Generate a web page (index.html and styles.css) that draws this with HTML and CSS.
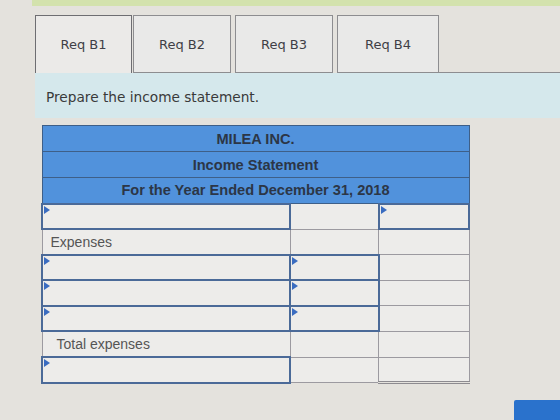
FILE: index.html
```html
<!DOCTYPE html>
<html lang="en">
<head>
  <meta charset="UTF-8">
  <title>Income Statement</title>
  <meta name="viewport" content="width=device-width, initial-scale=1.0">
  <link rel="stylesheet" href="styles.css">
</head>
<body>

  <div class="topbar"></div>

  <div class="tabs">
    <div class="tab active">Req B1</div>
    <div class="tab">Req B2</div>
    <div class="tab">Req B3</div>
    <div class="tab">Req B4</div>
    <div class="tab-rest"></div>
  </div>

  <div class="panel">Prepare the income statement.</div>

  <table class="statement">
    <colgroup>
      <col class="c-label">
      <col class="c-amt">
      <col class="c-total">
    </colgroup>
    <tr class="head"><th colspan="3">MILEA INC.</th></tr>
    <tr class="head"><th colspan="3">Income Statement</th></tr>
    <tr class="head"><th colspan="3">For the Year Ended December 31, 2018</th></tr>

    <tr>
      <td class="field"></td>
      <td></td>
      <td class="field"></td>
    </tr>
    <tr>
      <td class="label">Expenses</td>
      <td></td>
      <td></td>
    </tr>
    <tr>
      <td class="field"></td>
      <td class="field"></td>
      <td></td>
    </tr>
    <tr>
      <td class="field"></td>
      <td class="field"></td>
      <td></td>
    </tr>
    <tr>
      <td class="field"></td>
      <td class="field"></td>
      <td></td>
    </tr>
    <tr>
      <td class="label indent">Total expenses</td>
      <td></td>
      <td></td>
    </tr>
    <tr>
      <td class="field"></td>
      <td></td>
      <td class="double"></td>
    </tr>
  </table>

  <div class="footer">
    <button class="next"></button>
  </div>

</body>
</html>
```

FILE: styles.css
```css
* {
  box-sizing: border-box;
}
body {
  margin: 0;
  background: #e4e2dd;
  font-family: "DejaVu Sans", Verdana, sans-serif;
  color: #3d3d3d;
  overflow: hidden;
}

.topbar {
  height: 6px;
  margin-left: 32px;
  background: #d3e2ad;
}

/* Tabs */
.tabs {
  display: flex;
  align-items: flex-end;
  margin-top: 9px;
  padding-left: 35px;
}

.tab {
  width: 98px;
  height: 58px;
  margin-right: 4px;
  display: flex;
  align-items: center;
  justify-content: center;
  font-size: 13px;
  color: #3f3f46;
  background: #e9e9e8;
  border: 1px solid #8d8d90;
}

.tab.active {
  width: 97px;
  margin-right: 1px;
  border-bottom: none;
  border-color: #6e6e72;
  background: #ebeae8;
}

.tab:nth-child(4) {
  width: 102px;
  margin-right: 0;
}

.tab-rest {
  flex: 1;
  border-bottom: 1px solid #8d8d90;
}

.panel {
  margin-left: 35px;
  height: 45px;
  padding: 16px 0 0 11px;
  background: #d5e8ec;
  font-size: 13.7px;
  color: #3a3a3a;
}

/* Income statement */
.statement {
  margin: 7px 0 0 41px;
  width: 429px;
  border-collapse: collapse;
  font-family: "Liberation Sans", Arial, sans-serif;
  font-size: 14px;
}

.c-label { width: 249px; }
.c-amt { width: 89px; }
.c-total { width: 91px; }

.head th {
  height: 26px;
  padding: 0;
  background: #5192dc;
  border: 1px solid #3e5f88;
  color: #2c3646;
  font-size: 14.6px;
  font-weight: bold;
  text-align: center;
}

.statement td {
  position: relative;
  height: 25.6px;
  padding: 0;
  background: #edecea;
  border: 1px solid #9c9aa0;
}

.statement td.field {
  border: 2px solid #4b6a98;
}

.statement td.field::before {
  content: "";
  position: absolute;
  top: 1px;
  left: 1px;
  border-top: 4px solid transparent;
  border-bottom: 4px solid transparent;
  border-left: 6px solid #3a6cc0;
}

.statement td.label {
  padding-left: 8px;
  color: #555;
}

.statement td.indent {
  padding-left: 14px;
}

.statement td.double {
  border-bottom: 3px double #8d8b90;
}

.footer {
  display: flex;
  justify-content: flex-end;
  margin-top: 16px;
}

.next {
  width: 46px;
  height: 22px;
  border: none;
  border-radius: 2px 0 0 0;
  background: #2a72cc;
}
```
